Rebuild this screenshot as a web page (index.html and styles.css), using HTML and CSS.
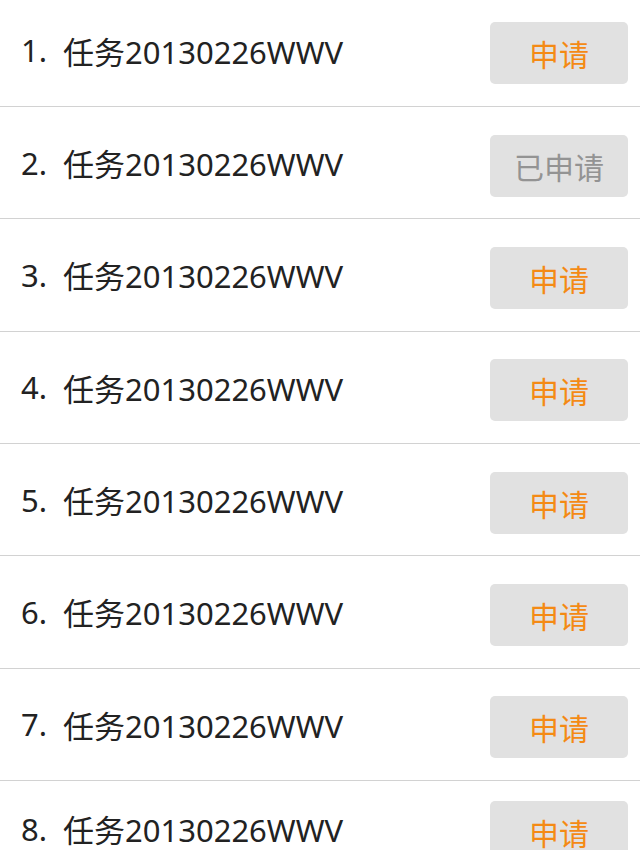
FILE: index.html
```html
<!DOCTYPE html>
<html lang="zh-CN">
<head>
<meta charset="utf-8">
<title>任务列表</title>
<link rel="stylesheet" href="styles.css">
</head>
<body>
<ul class="task-list">
  <li class="row first"><span class="num">1.</span><span class="name">任务20130226WWV</span><button class="apply">申请</button></li>
  <li class="row"><span class="num">2.</span><span class="name">任务20130226WWV</span><button class="apply done">已申请</button></li>
  <li class="row"><span class="num">3.</span><span class="name">任务20130226WWV</span><button class="apply">申请</button></li>
  <li class="row"><span class="num">4.</span><span class="name">任务20130226WWV</span><button class="apply">申请</button></li>
  <li class="row"><span class="num">5.</span><span class="name">任务20130226WWV</span><button class="apply">申请</button></li>
  <li class="row"><span class="num">6.</span><span class="name">任务20130226WWV</span><button class="apply">申请</button></li>
  <li class="row"><span class="num">7.</span><span class="name">任务20130226WWV</span><button class="apply">申请</button></li>
  <li class="row last"><span class="num">8.</span><span class="name">任务20130226WWV</span><button class="apply">申请</button></li>
</ul>
</body>
</html>
```

FILE: styles.css
```css
html, body {
  margin: 0;
  padding: 0;
  background: #ffffff;
}

body {
  font-family: "Noto Sans", "Noto Sans CJK SC", sans-serif;
  color: #222222;
  overflow: hidden;
}

.task-list {
  list-style: none;
  margin: 0;
  padding: 0;
}

.row {
  display: flex;
  align-items: center;
  box-sizing: border-box;
  height: 112.33px;
  padding: 6px 12px 0 21px;
  border-bottom: 1px solid #d2d2d2;
}

.row.first {
  height: 107px;
  padding-top: 0;
}

.row.last {
  padding-top: 0;
  padding-bottom: 10px;
}

.num {
  font-size: 31px;
  width: 42px;
  flex: none;
  padding-bottom: 6px;
}

.name {
  font-size: 31px;
  flex: 1;
  white-space: nowrap;
  padding-bottom: 6px;
}

.apply {
  flex: none;
  width: 138px;
  height: 62px;
  border: none;
  border-radius: 5px;
  background: #e1e1e1;
  color: #f48a14;
  font-family: "Noto Sans CJK SC", sans-serif;
  font-size: 30px;
  padding: 0;
  cursor: pointer;
}

.apply.done {
  color: #939393;
}
```
